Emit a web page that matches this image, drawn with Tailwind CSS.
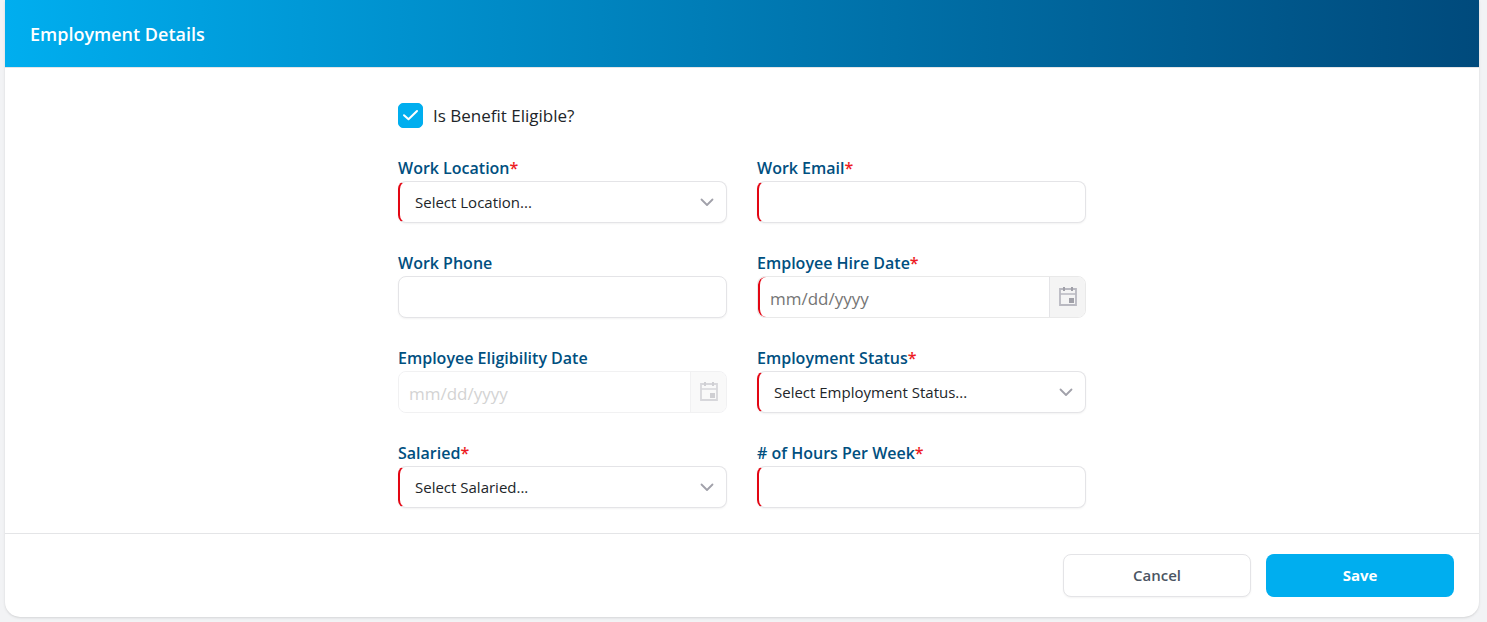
<!DOCTYPE html>
<html lang="en">

<head>
    <meta charset="UTF-8">
    <meta name="viewport" content="width=device-width, initial-scale=1.0">
    <title>Employment Details</title>
    <script src="https://cdn.jsdelivr.net/npm/@tailwindcss/browser@4"></script>
</head>

<body class="bg-[#f2f3f5] font-['Open_Sans','Noto_Sans',sans-serif] text-[#212529]">
    <form class="ml-[5px] mr-2 mb-[5px] bg-white rounded-b-[15px] shadow-sm">
        <header class="flex items-center h-[68px] px-[25px] border-b border-[#e4e5e7] bg-linear-to-r from-[#00aeef] to-[#004a7c] bg-clip-padding">
            <h1 class="text-lg font-semibold text-white">Employment Details</h1>
        </header>

        <main class="max-w-[688px] mx-auto pt-[35px] pb-[25px]">
            <!-- Benefit eligibility -->
            <div class="flex items-center gap-[10px] mb-7">
                <span class="relative flex">
                    <input id="eligible" type="checkbox" checked class="peer appearance-none size-[25px] rounded-[5px] border border-[#00aeef] checked:bg-[#00aeef]">
                    <svg class="hidden peer-checked:block absolute inset-0 size-[25px] pointer-events-none" viewBox="0 0 25 25" fill="none" stroke="#fff" stroke-width="2" stroke-linecap="round" stroke-linejoin="round">
                        <path d="M6 12.2L10.5 16.3L19 8" />
                    </svg>
                </span>
                <label for="eligible" class="text-[17px] leading-[25px]">Is Benefit Eligible?</label>
            </div>

            <div class="grid grid-cols-2 gap-x-[30px] gap-y-7">
                <div>
                    <label for="location" class="block text-base leading-[25px] font-semibold text-[#004f80]">Work Location<span class="text-[#ed1c24]">*</span></label>
                    <div class="relative">
                        <select id="location" required class="block appearance-none w-full h-[42px] pl-[15px] pr-10 text-[15px] bg-white border border-[#e4e4e7] border-l-2 border-l-[#e30613] rounded-lg shadow-xs">
                            <option>Select Location...</option>
                        </select>
                        <svg class="absolute right-[13px] top-[14px] size-[14px] pointer-events-none" viewBox="0 0 14 14" fill="none" stroke="#a1a1aa" stroke-width="1.8" stroke-linecap="round" stroke-linejoin="round">
                            <path d="M1.5 4.5L7 10L12.5 4.5" />
                        </svg>
                    </div>
                </div>

                <div>
                    <label for="email" class="block text-base leading-[25px] font-semibold text-[#004f80]">Work Email<span class="text-[#ed1c24]">*</span></label>
                    <input id="email" type="email" required class="block w-full h-[42px] px-[10px] text-[17px] bg-white border border-[#e4e4e7] border-l-2 border-l-[#e30613] rounded-lg shadow-xs">
                </div>

                <div>
                    <label for="phone" class="block text-base leading-[25px] font-semibold text-[#004f80]">Work Phone</label>
                    <input id="phone" type="tel" class="block w-full h-[42px] px-[10px] text-[17px] bg-white border border-[#e4e4e7] rounded-lg shadow-xs">
                </div>

                <div>
                    <label for="hireDate" class="block text-base leading-[25px] font-semibold text-[#004f80]">Employee Hire Date<span class="text-[#ed1c24]">*</span></label>
                    <div class="flex h-[42px] border border-[#e9e9e9] rounded-lg overflow-hidden">
                        <input id="hireDate" type="text" required placeholder="mm/dd/yyyy" class="flex-1 min-w-0 pl-[10px] pt-1 text-[17px] bg-white border-l-2 border-[#e30613] rounded-l-lg placeholder:text-[#757575]">
                        <button type="button" aria-label="Choose hire date" class="flex items-center justify-center w-9 bg-[#f4f4f4] border-l border-[#e4e4e7]">
                            <svg class="w-[18px] h-5" viewBox="0 0 18 20" fill="none">
                                <path d="M1 2H17V18H1Z" fill="#f4f4f4" stroke="#b9b9c1" stroke-width="1.8" />
                                <path d="M1 7H17" stroke="#b9b9c1" stroke-width="1.6" />
                                <path d="M5 0V4M13 0V4" stroke="#a0a0a8" stroke-width="2" />
                                <path d="M10 11H15V16H10Z" fill="#a0a0a8" />
                            </svg>
                        </button>
                    </div>
                </div>

                <div>
                    <label for="eligibilityDate" class="block text-base leading-[25px] font-semibold text-[#004f80]">Employee Eligibility Date</label>
                    <div class="flex h-[42px] border border-[#e4e4e7] rounded-lg overflow-hidden opacity-50">
                        <input id="eligibilityDate" type="text" disabled placeholder="mm/dd/yyyy" class="flex-1 min-w-0 pl-[10px] pt-1 text-[17px] bg-white placeholder:text-[#a8a8a8]">
                        <button type="button" disabled aria-label="Choose eligibility date" class="flex items-center justify-center w-9 bg-[#f4f4f4] border-l border-[#e4e4e7]">
                            <svg class="w-[18px] h-5" viewBox="0 0 18 20" fill="none">
                                <path d="M1 2H17V18H1Z" fill="#f4f4f4" stroke="#b1b1b9" stroke-width="1.8" />
                                <path d="M1 7H17" stroke="#b1b1b9" stroke-width="1.6" />
                                <path d="M5 0V4M13 0V4" stroke="#a0a0a8" stroke-width="2" />
                                <path d="M10 11H15V16H10Z" fill="#a0a0a8" />
                            </svg>
                        </button>
                    </div>
                </div>

                <div>
                    <label for="status" class="block text-base leading-[25px] font-semibold text-[#004f80]">Employment Status<span class="text-[#ed1c24]">*</span></label>
                    <div class="relative">
                        <select id="status" required class="block appearance-none w-full h-[42px] pl-[15px] pr-10 text-[15px] bg-white border border-[#e4e4e7] border-l-2 border-l-[#e30613] rounded-lg shadow-xs">
                            <option>Select Employment Status...</option>
                        </select>
                        <svg class="absolute right-[13px] top-[14px] size-[14px] pointer-events-none" viewBox="0 0 14 14" fill="none" stroke="#a1a1aa" stroke-width="1.8" stroke-linecap="round" stroke-linejoin="round">
                            <path d="M1.5 4.5L7 10L12.5 4.5" />
                        </svg>
                    </div>
                </div>

                <div>
                    <label for="salaried" class="block text-base leading-[25px] font-semibold text-[#004f80]">Salaried<span class="text-[#ed1c24]">*</span></label>
                    <div class="relative">
                        <select id="salaried" required class="block appearance-none w-full h-[42px] pl-[15px] pr-10 text-[15px] bg-white border border-[#e4e4e7] border-l-2 border-l-[#e30613] rounded-lg shadow-xs">
                            <option>Select Salaried...</option>
                        </select>
                        <svg class="absolute right-[13px] top-[14px] size-[14px] pointer-events-none" viewBox="0 0 14 14" fill="none" stroke="#a1a1aa" stroke-width="1.8" stroke-linecap="round" stroke-linejoin="round">
                            <path d="M1.5 4.5L7 10L12.5 4.5" />
                        </svg>
                    </div>
                </div>

                <div>
                    <label for="hours" class="block text-base leading-[25px] font-semibold text-[#004f80]"># of Hours Per Week<span class="text-[#ed1c24]">*</span></label>
                    <input id="hours" type="text" required class="block w-full h-[42px] px-[10px] text-[17px] bg-white border border-[#e4e4e7] border-l-2 border-l-[#e30613] rounded-lg shadow-xs">
                </div>
            </div>
        </main>

        <footer class="flex justify-end gap-[15px] px-[25px] py-5 border-t border-[#e4e5e7]">
            <button type="button" class="w-[188px] h-[43px] text-[15px] font-semibold text-[#4b5563] bg-white border border-[#e4e4e7] rounded-lg shadow-xs">Cancel</button>
            <button type="submit" class="w-[188px] h-[43px] text-[15px] font-bold text-white bg-[#00aeef] rounded-lg">Save</button>
        </footer>
    </form>
</body>

</html>
